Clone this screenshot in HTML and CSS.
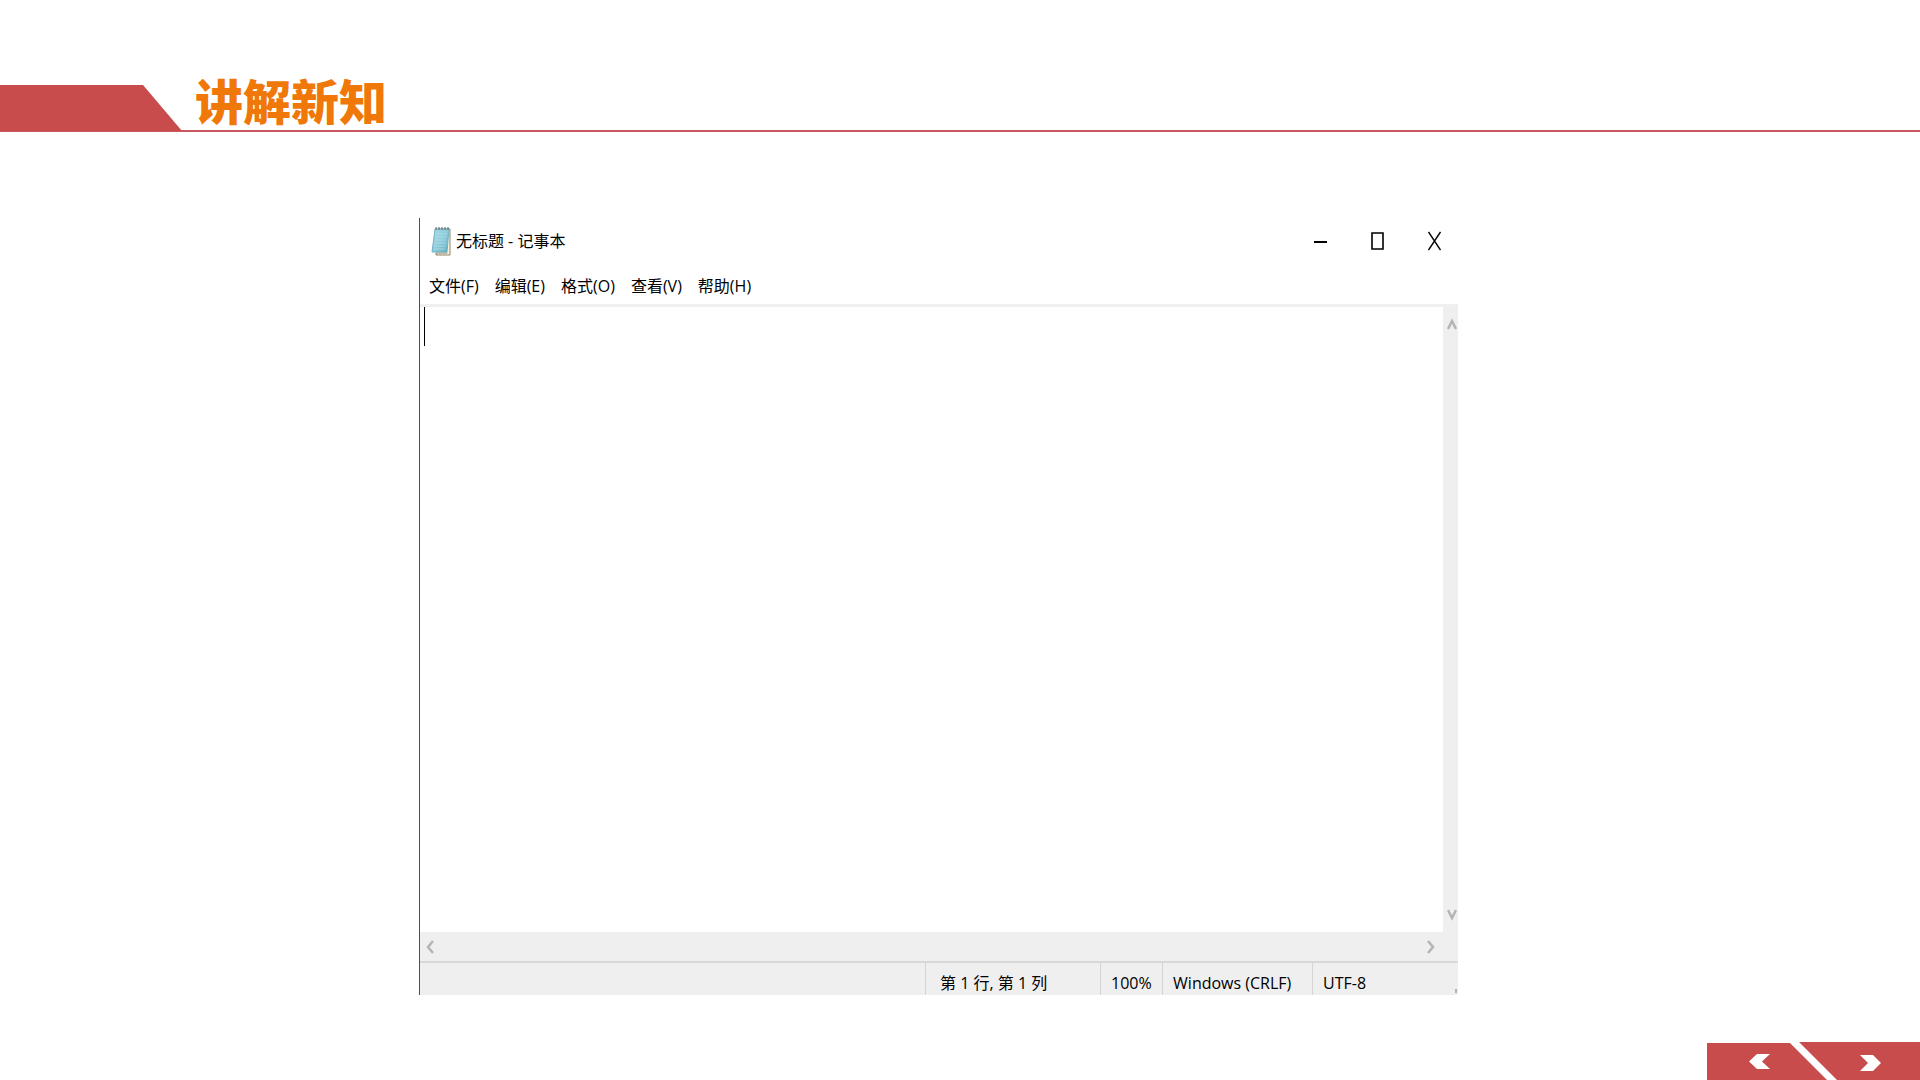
FILE: index.html
```html
<!DOCTYPE html>
<html lang="zh-CN">
<head>
<meta charset="utf-8">
<meta name="viewport" content="width=device-width, initial-scale=1">
<title>讲解新知</title>
<link rel="stylesheet" href="styles.css">
</head>
<body>
<div class="slide">
  <header class="slide-header">
    <div class="header-tab"></div>
    <h1 class="slide-title">讲解新知</h1>
  </header>

  <main class="stage">
    <section class="notepad" aria-label="记事本">
      <div class="titlebar">
        <svg class="app-icon" width="20" height="30" viewBox="0 0 20 30" aria-hidden="true">
          <defs>
            <linearGradient id="page" x1="0" y1="0" x2="1" y2="1">
              <stop offset="0" stop-color="#a9dbe6"/>
              <stop offset="0.5" stop-color="#8fcbdc"/>
              <stop offset="1" stop-color="#5fa9c0"/>
            </linearGradient>
          </defs>
          <path d="M5 3H19V29H5V27H16Z" fill="#f5efdc" stroke="#8f8468" stroke-width="1"/>
          <path d="M4 3H18L16 26H1Z" fill="url(#page)" stroke="#73b3c4" stroke-width="1"/>
          <path d="M4 8H16M4 11H16M4 14H15M3 17H15M3 20H15M3 23H14" stroke="#b9e2ea" stroke-width="1" opacity="0.7"/>
          <path d="M5 1V4M8 1V4M11 1V4M14 1V4M17 1V4" stroke="#56666b" stroke-width="1"/>
        </svg>
        <h2 class="window-title">无标题 - 记事本</h2>
        <div class="window-controls">
          <button class="control" type="button" aria-label="最小化"><svg width="13" height="20" viewBox="0 0 13 20"><path d="M0 11H13" stroke="#000" stroke-width="2"/></svg></button>
          <button class="control" type="button" aria-label="最大化"><svg width="13" height="20" viewBox="0 0 13 20"><path d="M1 2H12V18H1Z" fill="none" stroke="#000" stroke-width="1.6"/></svg></button>
          <button class="control" type="button" aria-label="关闭"><svg width="13" height="20" viewBox="0 0 13 20"><path d="M.5 1L12.500 19M12.500 1L.5 19" stroke="#000" stroke-width="1.4"/></svg></button>
        </div>
      </div>

      <nav class="menubar" aria-label="菜单">
        <button class="menu-item" type="button">文件(F)</button>
        <button class="menu-item" type="button">编辑(E)</button>
        <button class="menu-item" type="button">格式(O)</button>
        <button class="menu-item" type="button">查看(V)</button>
        <button class="menu-item" type="button">帮助(H)</button>
      </nav>

      <div class="workspace">
        <div class="editor">
          <textarea class="editor-text" aria-label="文本编辑器"></textarea>
          <span class="caret"></span>
        </div>
        <div class="scroll-vertical">
          <button class="scroll-button" type="button" aria-label="向上滚动"><svg width="10" height="12" viewBox="0 0 10 12"><path d="M1 11L5 3L9 11" fill="none" stroke="#b4b4b4" stroke-width="2.500"/></svg></button>
          <button class="scroll-button" type="button" aria-label="向下滚动"><svg width="10" height="12" viewBox="0 0 10 12"><path d="M1 1L5 9L9 1" fill="none" stroke="#b4b4b4" stroke-width="2.500"/></svg></button>
        </div>
      </div>
      <div class="scroll-horizontal">
        <button class="scroll-button" type="button" aria-label="向左滚动"><svg width="8" height="14" viewBox="0 0 8 14"><path d="M7 1L2 7L7 13" fill="none" stroke="#b4b4b4" stroke-width="2.500"/></svg></button>
        <button class="scroll-button" type="button" aria-label="向右滚动"><svg width="8" height="14" viewBox="0 0 8 14"><path d="M1 1L6 7L1 13" fill="none" stroke="#b4b4b4" stroke-width="2.500"/></svg></button>
      </div>

      <footer class="statusbar">
        <span class="status position">第 1 行, 第 1 列</span>
        <span class="status zoom">100%</span>
        <span class="status line-ending">Windows (CRLF)</span>
        <span class="status encoding">UTF-8</span>
        <span class="grip"></span>
      </footer>
    </section>
  </main>

  <nav class="pager" aria-label="翻页">
    <button class="page-button previous" type="button" aria-label="上一页"><svg width="21" height="15" viewBox="0 0 21 15"><path d="M8 0H21L13 7.500L21 15H8L0 7.500Z" fill="#fff"/></svg></button>
    <button class="page-button next" type="button" aria-label="下一页"><svg width="21" height="16" viewBox="0 0 21 16"><path d="M0 0H13L21 8L13 16H0L8 8Z" fill="#fff"/></svg></button>
  </nav>
</div>
</body>
</html>
```

FILE: styles.css
```css
* {
  box-sizing: border-box;
}

body {
  margin: 0;
  background: #fff;
  color: #000;
  font-family: "Open Sans", "Noto Sans CJK SC", sans-serif;
  font-size: 16px;
  line-height: 24px;
}

button {
  margin: 0;
  padding: 0;
  border: 0;
  background: none;
  color: inherit;
  font: inherit;
}

svg {
  display: block;
}

.slide {
  display: flex;
  flex-direction: column;
  min-height: 100vh;
}

/* Slide header */
.slide-header {
  display: flex;
  align-items: flex-end;
  gap: 13px;
  height: 132px;
  border-bottom: 2px solid #ca5a5f;
}

.header-tab {
  width: 182px;
  height: 46px;
  margin-bottom: -1px;
  background: #c84c4c;
  clip-path: polygon(0 0, 143px 0, 100% 100%, 0 100%);
}

.slide-title {
  margin: 0;
  padding-bottom: 3px;
  color: #f07808;
  font-family: "Noto Sans CJK SC", sans-serif;
  font-size: 48px;
  font-weight: 900;
  line-height: 56px;
}

/* Notepad window */
.stage {
  display: flex;
  flex: 1;
  padding: 86px 24.06% 47px 21.82%;
}

.notepad {
  display: flex;
  flex: 1;
  flex-direction: column;
  min-width: 0;
  border-left: 1px solid #505050;
}

.titlebar {
  display: flex;
  align-items: center;
  gap: 5px;
  height: 46px;
  padding: 0 17px 0 11px;
}

.window-title {
  margin: 0;
  font-size: 16px;
  font-weight: 400;
}

.window-controls {
  display: flex;
  gap: 44px;
  margin-left: auto;
}

.menubar {
  display: flex;
  align-items: center;
  gap: 16px;
  height: 43px;
  padding: 4px 9px 0;
  border-bottom: 3px solid #f0f0f0;
}

.workspace {
  display: flex;
  flex: 1;
}

.editor {
  position: relative;
  display: flex;
  flex: 1;
}

.editor-text {
  flex: 1;
  min-width: 0;
  padding: 4px;
  border: 0;
  outline: 0;
  background: #fff;
  font: inherit;
  resize: none;
}

.caret {
  position: absolute;
  top: 0;
  left: 4px;
  width: 1px;
  height: 39px;
  background: #000;
}

.scroll-vertical {
  display: flex;
  flex-direction: column;
  align-items: flex-end;
  justify-content: space-between;
  width: 15px;
  padding: 11px 1px;
  background: #efefef;
}

.scroll-horizontal {
  display: flex;
  align-items: center;
  justify-content: space-between;
  height: 29px;
  padding: 0 23px 0 6px;
  background: #efefef;
}

.statusbar {
  position: relative;
  display: flex;
  justify-content: flex-end;
  height: 34px;
  border-top: 2px solid #d8d8d8;
  background: #efefef;
}

.status {
  padding: 8px 0 0 10px;
  border-left: 1px solid #d4d4d4;
  white-space: nowrap;
}

.position {
  width: 175px;
  padding-left: 14px;
}

.zoom {
  width: 62px;
}

.line-ending {
  width: 150px;
}

.encoding {
  width: 146px;
}

.grip {
  position: absolute;
  right: 1px;
  bottom: 2px;
  width: 2px;
  height: 4px;
  background: #b4b4b4;
}

/* Page navigation */
.pager {
  display: flex;
  align-items: flex-end;
  justify-content: flex-end;
}

.page-button {
  background: #c84c4c;
}

.previous {
  width: 120px;
  height: 37px;
  padding-left: 42px;
  clip-path: polygon(0 0, 83px 0, 100% 100%, 0 100%);
}

.next {
  width: 121px;
  height: 38px;
  margin-left: -28px;
  padding: 4px 0 0 61px;
  clip-path: polygon(0 0, 100% 0, 100% 100%, 38px 100%);
}
```
